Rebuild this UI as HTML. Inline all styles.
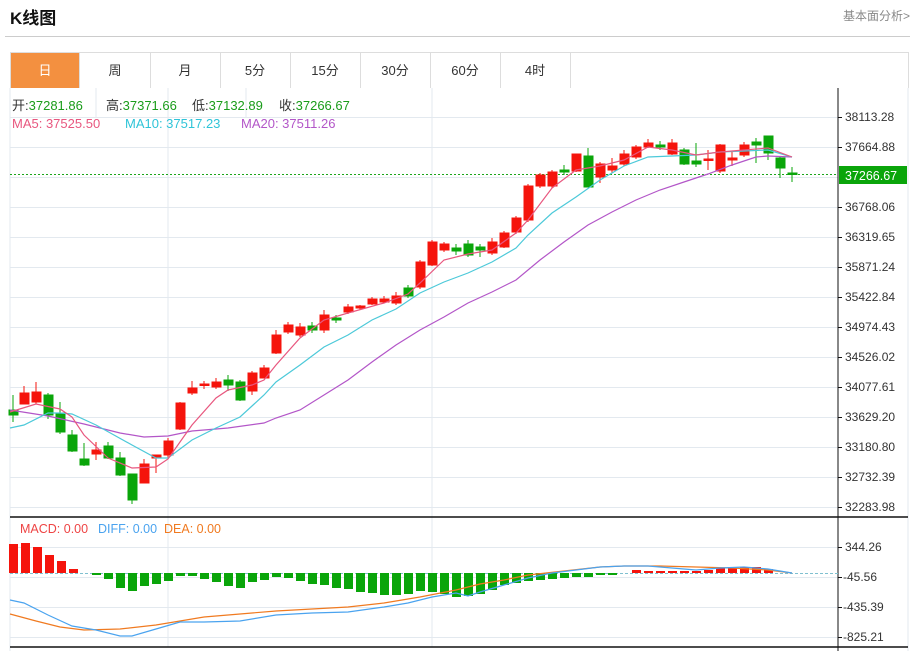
<!DOCTYPE html>
<html><head><meta charset="utf-8"><style>
body{margin:0;width:918px;height:651px;background:#fff;font-family:"Liberation Sans","Noto Sans CJK SC",sans-serif;overflow:hidden;position:relative}
.t{position:absolute;left:10px;top:4px;font-size:17px;font-weight:bold;color:#111}
.r{position:absolute;right:8px;top:7px;font-size:12px;color:#888}
.hl{position:absolute;left:5px;top:36px;width:905px;height:1px;background:#ccc}
.tabs{position:absolute;left:10px;top:52px;width:897px;height:35px;border:1px solid #ddd;border-bottom:none}
.tab{position:absolute;top:0;height:35px;width:70px;border-right:1px solid #ddd;text-align:center;line-height:35px;font-size:13px;color:#333}
svg{position:absolute;left:0;top:0}
</style></head><body>
<div class="t">K线图</div><div class="r">基本面分析&gt;</div><div class="hl"></div>
<div class="tabs">
<div class="tab" style="left:0;width:68px;background:#f39040;color:#fff">日</div>
<div class="tab" style="left:69px">周</div><div class="tab" style="left:139px">月</div>
<div class="tab" style="left:209px">5分</div><div class="tab" style="left:279px">15分</div>
<div class="tab" style="left:349px">30分</div><div class="tab" style="left:419px">60分</div>
<div class="tab" style="left:489px">4时</div>
</div>
<svg width="918" height="651" font-family="Liberation Sans, Noto Sans CJK SC, sans-serif">
<g stroke="#e3e9ef" stroke-width="1">
<line x1="10" y1="88" x2="10" y2="651"/><line x1="908" y1="88" x2="908" y2="651"/>
<line x1="168" y1="88" x2="168" y2="647"/><line x1="432" y1="88" x2="432" y2="647"/>
<line x1="96" y1="88" x2="96" y2="117"/><line x1="246" y1="88" x2="246" y2="117"/>
<line x1="10" y1="117.5" x2="838" y2="117.5"/><line x1="10" y1="147.5" x2="838" y2="147.5"/><line x1="10" y1="177.5" x2="838" y2="177.5"/><line x1="10" y1="207.5" x2="838" y2="207.5"/><line x1="10" y1="237.5" x2="838" y2="237.5"/><line x1="10" y1="267.5" x2="838" y2="267.5"/><line x1="10" y1="297.5" x2="838" y2="297.5"/><line x1="10" y1="327.5" x2="838" y2="327.5"/><line x1="10" y1="357.5" x2="838" y2="357.5"/><line x1="10" y1="387.5" x2="838" y2="387.5"/><line x1="10" y1="417.5" x2="838" y2="417.5"/><line x1="10" y1="447.5" x2="838" y2="447.5"/><line x1="10" y1="477.5" x2="838" y2="477.5"/><line x1="10" y1="507.5" x2="838" y2="507.5"/>
<line x1="10" y1="547.5" x2="838" y2="547.5"/><line x1="10" y1="577.5" x2="838" y2="577.5"/><line x1="10" y1="607.5" x2="838" y2="607.5"/><line x1="10" y1="637.5" x2="838" y2="637.5"/>
</g>
<line x1="10" y1="517" x2="908" y2="517" stroke="#111" stroke-width="1.5"/>
<line x1="10" y1="647" x2="908" y2="647" stroke="#111" stroke-width="1.5"/>
<line x1="838" y1="88" x2="838" y2="651" stroke="#111" stroke-width="1"/>
<g stroke="#111"><line x1="838" y1="117.5" x2="842" y2="117.5"/><line x1="838" y1="147.5" x2="842" y2="147.5"/><line x1="838" y1="207.5" x2="842" y2="207.5"/><line x1="838" y1="237.5" x2="842" y2="237.5"/><line x1="838" y1="267.5" x2="842" y2="267.5"/><line x1="838" y1="297.5" x2="842" y2="297.5"/><line x1="838" y1="327.5" x2="842" y2="327.5"/><line x1="838" y1="357.5" x2="842" y2="357.5"/><line x1="838" y1="387.5" x2="842" y2="387.5"/><line x1="838" y1="417.5" x2="842" y2="417.5"/><line x1="838" y1="447.5" x2="842" y2="447.5"/><line x1="838" y1="477.5" x2="842" y2="477.5"/><line x1="838" y1="507.5" x2="842" y2="507.5"/><line x1="838" y1="547.5" x2="842" y2="547.5"/><line x1="838" y1="577.5" x2="842" y2="577.5"/><line x1="838" y1="607.5" x2="842" y2="607.5"/><line x1="838" y1="637.5" x2="842" y2="637.5"/></g>
<g font-size="12" fill="#333">
<text x="845" y="121">38113.28</text><text x="845" y="151">37664.88</text><text x="845" y="211">36768.06</text><text x="845" y="241">36319.65</text><text x="845" y="271">35871.24</text><text x="845" y="301">35422.84</text><text x="845" y="331">34974.43</text><text x="845" y="361">34526.02</text><text x="845" y="391">34077.61</text><text x="845" y="421">33629.20</text><text x="845" y="451">33180.80</text><text x="845" y="481">32732.39</text><text x="845" y="511">32283.98</text>
<text x="845" y="551">344.26</text><text x="843" y="581">-45.56</text><text x="843" y="611">-435.39</text><text x="843" y="641">-825.21</text>
</g>
<line x1="10" y1="174.5" x2="838" y2="174.5" stroke="#1aa51a" stroke-dasharray="2,2"/>
<rect x="839" y="166" width="68" height="18" fill="#0aa50a"/>
<text x="845" y="180" font-size="12.5" fill="#fff">37266.67</text>
<g font-size="13">
<text x="12" y="110" fill="#333">开:<tspan fill="#1a9c1a">37281.86</tspan></text>
<text x="106" y="110" fill="#333">高:<tspan fill="#1a9c1a">37371.66</tspan></text>
<text x="192" y="110" fill="#333">低:<tspan fill="#1a9c1a">37132.89</tspan></text>
<text x="279" y="110" fill="#333">收:<tspan fill="#1a9c1a">37266.67</tspan></text>
<text x="12" y="128" fill="#e8577f">MA5: 37525.50</text>
<text x="125" y="128" fill="#2fc4d8">MA10: 37517.23</text>
<text x="241" y="128" fill="#b356c8">MA20: 37511.26</text>
<text x="20" y="533" font-size="12.5" fill="#ee4444">MACD: 0.00</text>
<text x="98" y="533" font-size="12.5" fill="#4aa3ef">DIFF: 0.00</text>
<text x="164" y="533" font-size="12.5" fill="#f07a20">DEA: 0.00</text>
</g>
<g stroke="#f5140c" fill="#f5140c">
<line x1="24" y1="386" x2="24" y2="404"/><rect x="20" y="393" width="9" height="11"/>
<line x1="36" y1="382" x2="36" y2="404"/><rect x="32" y="392" width="9" height="10"/>
<line x1="96" y1="442" x2="96" y2="460"/><rect x="92" y="450" width="9" height="4"/>
<line x1="144" y1="459" x2="144" y2="483"/><rect x="140" y="464" width="9" height="19"/>
<line x1="156" y1="455" x2="156" y2="473"/><rect x="152" y="455" width="9" height="3"/>
<line x1="168" y1="438" x2="168" y2="458"/><rect x="164" y="441" width="9" height="14"/>
<line x1="180" y1="402" x2="180" y2="430"/><rect x="176" y="403" width="9" height="26"/>
<line x1="192" y1="381" x2="192" y2="395"/><rect x="188" y="388" width="9" height="5"/>
<line x1="204" y1="381" x2="204" y2="389"/><rect x="200" y="384" width="9" height="1.5"/>
<line x1="216" y1="378" x2="216" y2="389"/><rect x="212" y="382" width="9" height="5"/>
<line x1="252" y1="371" x2="252" y2="395"/><rect x="248" y="373" width="9" height="18"/>
<line x1="264" y1="365" x2="264" y2="378"/><rect x="260" y="368" width="9" height="10"/>
<line x1="276" y1="330" x2="276" y2="354"/><rect x="272" y="335" width="9" height="18"/>
<line x1="288" y1="322" x2="288" y2="334"/><rect x="284" y="325" width="9" height="7"/>
<line x1="300" y1="323" x2="300" y2="337"/><rect x="296" y="327" width="9" height="8"/>
<line x1="324" y1="310" x2="324" y2="333"/><rect x="320" y="315" width="9" height="15"/>
<line x1="348" y1="304" x2="348" y2="314"/><rect x="344" y="307" width="9" height="5"/>
<line x1="360" y1="305" x2="360" y2="310"/><rect x="356" y="306" width="9" height="2"/>
<line x1="372" y1="297" x2="372" y2="305"/><rect x="368" y="299" width="9" height="5"/>
<line x1="384" y1="296" x2="384" y2="303"/><rect x="380" y="299" width="9" height="3"/>
<line x1="396" y1="292" x2="396" y2="305"/><rect x="392" y="296" width="9" height="7"/>
<line x1="420" y1="260" x2="420" y2="289"/><rect x="416" y="262" width="9" height="25"/>
<line x1="432" y1="240" x2="432" y2="266"/><rect x="428" y="242" width="9" height="23"/>
<line x1="444" y1="242" x2="444" y2="252"/><rect x="440" y="244" width="9" height="6"/>
<line x1="492" y1="238" x2="492" y2="255"/><rect x="488" y="242" width="9" height="11"/>
<line x1="504" y1="231" x2="504" y2="248"/><rect x="500" y="233" width="9" height="14"/>
<line x1="516" y1="216" x2="516" y2="234"/><rect x="512" y="218" width="9" height="14"/>
<line x1="528" y1="184" x2="528" y2="222"/><rect x="524" y="186" width="9" height="34"/>
<line x1="540" y1="173" x2="540" y2="188"/><rect x="536" y="175" width="9" height="11"/>
<line x1="552" y1="170" x2="552" y2="188"/><rect x="548" y="172" width="9" height="14"/>
<line x1="576" y1="154" x2="576" y2="172"/><rect x="572" y="154" width="9" height="17"/>
<line x1="600" y1="162" x2="600" y2="183"/><rect x="596" y="164" width="9" height="13"/>
<line x1="612" y1="158" x2="612" y2="173"/><rect x="608" y="166" width="9" height="4"/>
<line x1="624" y1="150" x2="624" y2="166"/><rect x="620" y="154" width="9" height="10"/>
<line x1="636" y1="145" x2="636" y2="159"/><rect x="632" y="147" width="9" height="10"/>
<line x1="648" y1="139" x2="648" y2="148"/><rect x="644" y="143" width="9" height="4"/>
<line x1="672" y1="139" x2="672" y2="155"/><rect x="668" y="143" width="9" height="11"/>
<line x1="708" y1="150" x2="708" y2="170"/><rect x="704" y="159" width="9" height="1.5"/>
<line x1="720" y1="144" x2="720" y2="173"/><rect x="716" y="145" width="9" height="26"/>
<line x1="732" y1="152" x2="732" y2="166"/><rect x="728" y="158" width="9" height="2"/>
<line x1="744" y1="142" x2="744" y2="157"/><rect x="740" y="145" width="9" height="10"/>
</g>
<g stroke="#0aa50a" fill="#0aa50a">
<line x1="13" y1="395" x2="13" y2="422"/><rect x="9" y="410" width="9" height="5"/>
<line x1="48" y1="393" x2="48" y2="419"/><rect x="44" y="395" width="9" height="20"/>
<line x1="60" y1="402" x2="60" y2="434"/><rect x="56" y="413" width="9" height="19"/>
<line x1="72" y1="430" x2="72" y2="452"/><rect x="68" y="435" width="9" height="16"/>
<line x1="84" y1="443" x2="84" y2="466"/><rect x="80" y="459" width="9" height="6"/>
<line x1="108" y1="442" x2="108" y2="459"/><rect x="104" y="446" width="9" height="12"/>
<line x1="120" y1="452" x2="120" y2="476"/><rect x="116" y="458" width="9" height="17"/>
<line x1="132" y1="474" x2="132" y2="504"/><rect x="128" y="474" width="9" height="26"/>
<line x1="228" y1="375" x2="228" y2="391"/><rect x="224" y="380" width="9" height="5"/>
<line x1="240" y1="380" x2="240" y2="401"/><rect x="236" y="382" width="9" height="18"/>
<line x1="312" y1="322" x2="312" y2="333"/><rect x="308" y="326" width="9" height="4"/>
<line x1="336" y1="315" x2="336" y2="323"/><rect x="332" y="318" width="9" height="2"/>
<line x1="408" y1="285" x2="408" y2="298"/><rect x="404" y="288" width="9" height="8"/>
<line x1="456" y1="244" x2="456" y2="255"/><rect x="452" y="248" width="9" height="3"/>
<line x1="468" y1="240" x2="468" y2="257"/><rect x="464" y="244" width="9" height="11"/>
<line x1="480" y1="244" x2="480" y2="257"/><rect x="476" y="247" width="9" height="3"/>
<line x1="564" y1="165" x2="564" y2="175"/><rect x="560" y="170" width="9" height="2"/>
<line x1="588" y1="148" x2="588" y2="187"/><rect x="584" y="156" width="9" height="31"/>
<line x1="660" y1="141" x2="660" y2="150"/><rect x="656" y="145" width="9" height="2"/>
<line x1="684" y1="148" x2="684" y2="165"/><rect x="680" y="150" width="9" height="14"/>
<line x1="696" y1="143" x2="696" y2="167"/><rect x="692" y="161" width="9" height="3"/>
<line x1="756" y1="138" x2="756" y2="163"/><rect x="752" y="142" width="9" height="3"/>
<line x1="768" y1="136" x2="768" y2="160"/><rect x="764" y="136" width="9" height="17"/>
<line x1="780" y1="157" x2="780" y2="178"/><rect x="776" y="158" width="9" height="10"/>
<line x1="792" y1="167" x2="792" y2="182"/><rect x="788" y="173" width="9" height="1.5"/>
</g>
<g fill="none" stroke-width="1.2">
<polyline stroke="#b356c8" points="10,410 48,416 84,424 120,433 144,437 168,436 192,431 228,428 264,423 276,418 300,410 324,395 348,380 372,362 396,345 420,330 444,317 468,303 492,292 516,280 540,260 564,242 588,225 612,212 636,200 660,190 684,182 708,174 732,165 756,157 768,156 792,157"/>
<polyline stroke="#4cc9d9" points="10,428 24,425 48,413 60,413 72,414 96,425 132,445 156,458 168,458 192,440 216,428 240,417 264,395 276,382 300,365 324,347 348,335 372,320 396,309 420,293 444,282 468,273 492,262 516,248 528,235 552,213 576,197 600,180 624,166 648,157 672,156 696,155 720,152 744,151 768,150 792,157"/>
<polyline stroke="#e8577f" points="10,412 36,404 60,409 72,417 84,435 108,458 132,468 156,467 168,459 180,442 192,425 216,398 228,390 252,385 264,380 276,365 300,338 324,320 348,313 384,303 408,294 420,283 444,260 468,254 492,250 516,233 528,220 552,188 576,170 600,166 624,160 648,147 672,150 696,155 720,152 744,150 768,148 792,157"/>
</g>
<line x1="10" y1="573.5" x2="838" y2="573.5" stroke="#7fc0d0" stroke-dasharray="3,2"/>
<g fill="#f5140c">
<rect x="9" y="544" width="9" height="29"/><rect x="21" y="543" width="9" height="30"/><rect x="33" y="547" width="9" height="26"/><rect x="45" y="555" width="9" height="18"/><rect x="57" y="561" width="9" height="12"/><rect x="69" y="569" width="9" height="4"/>
<rect x="632" y="570" width="9" height="3"/><rect x="644" y="571" width="9" height="2"/><rect x="656" y="571" width="9" height="2"/><rect x="668" y="571" width="9" height="2"/><rect x="680" y="571" width="9" height="2"/><rect x="692" y="571" width="9" height="2"/><rect x="704" y="570" width="9" height="3"/><rect x="716" y="568" width="9" height="5"/><rect x="728" y="567" width="9" height="6"/><rect x="740" y="567" width="9" height="6"/><rect x="752" y="567" width="9" height="6"/><rect x="764" y="569" width="9" height="4"/>
</g>
<g fill="#0aa50a">
<rect x="92" y="573" width="9" height="2"/><rect x="104" y="573" width="9" height="6"/><rect x="116" y="573" width="9" height="15"/><rect x="128" y="573" width="9" height="18"/><rect x="140" y="573" width="9" height="13"/><rect x="152" y="573" width="9" height="11"/><rect x="164" y="573" width="9" height="8"/><rect x="176" y="573" width="9" height="3"/><rect x="188" y="573" width="9" height="3"/><rect x="200" y="573" width="9" height="6"/><rect x="212" y="573" width="9" height="9"/><rect x="224" y="573" width="9" height="13"/><rect x="236" y="573" width="9" height="15"/><rect x="248" y="573" width="9" height="9"/><rect x="260" y="573" width="9" height="7"/><rect x="272" y="573" width="9" height="4"/><rect x="284" y="573" width="9" height="5"/><rect x="296" y="573" width="9" height="8"/><rect x="308" y="573" width="9" height="11"/><rect x="320" y="573" width="9" height="12"/><rect x="332" y="573" width="9" height="15"/><rect x="344" y="573" width="9" height="16"/><rect x="356" y="573" width="9" height="19"/><rect x="368" y="573" width="9" height="20"/><rect x="380" y="573" width="9" height="22"/><rect x="392" y="573" width="9" height="22"/><rect x="404" y="573" width="9" height="21"/><rect x="416" y="573" width="9" height="18"/><rect x="428" y="573" width="9" height="19"/><rect x="440" y="573" width="9" height="21"/><rect x="452" y="573" width="9" height="24"/><rect x="464" y="573" width="9" height="23"/><rect x="476" y="573" width="9" height="21"/><rect x="488" y="573" width="9" height="17"/><rect x="500" y="573" width="9" height="12"/><rect x="512" y="573" width="9" height="10"/><rect x="524" y="573" width="9" height="8"/><rect x="536" y="573" width="9" height="7"/><rect x="548" y="573" width="9" height="6"/><rect x="560" y="573" width="9" height="5"/><rect x="572" y="573" width="9" height="4"/><rect x="584" y="573" width="9" height="4"/><rect x="596" y="573" width="9" height="2"/><rect x="608" y="573" width="9" height="2"/>
</g>
<g fill="none" stroke-width="1.2">
<polyline stroke="#f07a20" points="10,614 36,621 60,627 84,630 120,629 156,625 204,617 240,614 276,611 312,609 348,607 384,603 420,597 456,590 480,584 504,580 528,575 564,571 600,567 624,566 660,566 696,567 732,568 768,570 792,573"/>
<polyline stroke="#4aa3ef" points="10,600 24,603 48,615 72,626 96,630 120,636 132,636 156,629 180,622 204,622 240,621 276,615 312,613 348,612 384,607 408,603 432,597 456,593 468,596 480,592 504,585 528,578 552,573 576,570 600,567 624,566 648,566 672,568 696,570 720,568 744,567 768,569 792,573"/>
</g>
</svg>
</body></html>
